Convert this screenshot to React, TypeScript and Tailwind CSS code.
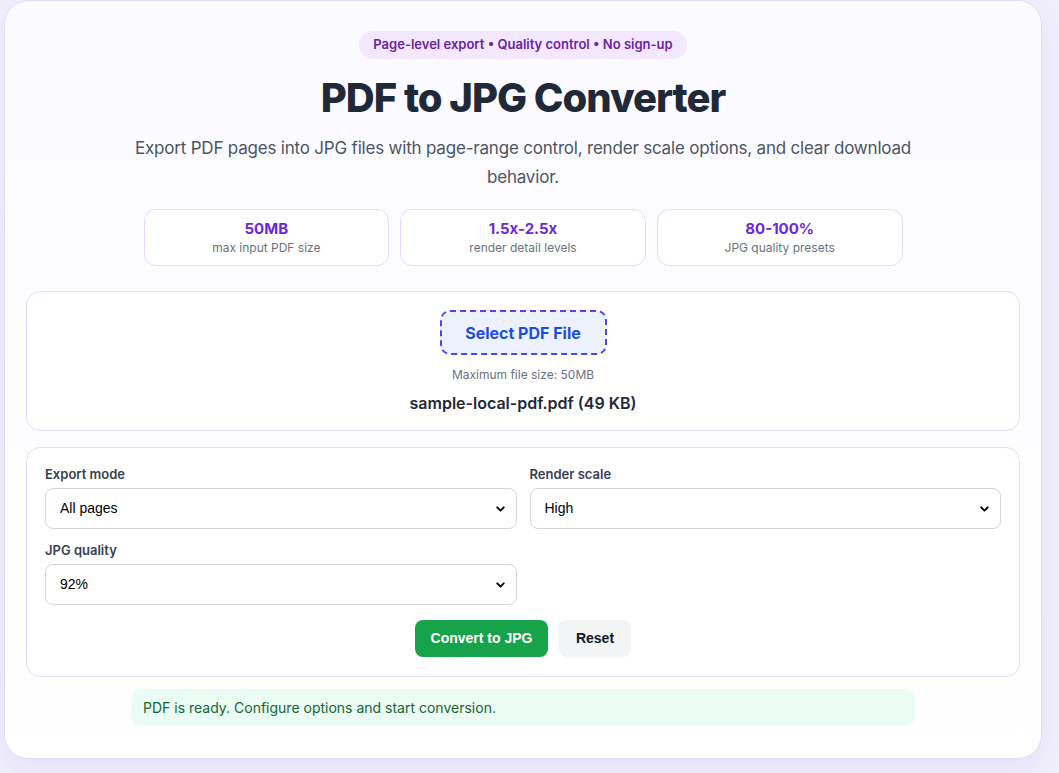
import { ChevronDown } from 'lucide-react';

const stats = [
    { value: '50MB', label: 'max input PDF size' },
    { value: '1.5x-2.5x', label: 'render detail levels' },
    { value: '80-100%', label: 'JPG quality presets' },
];

function Field({ label, value, options }: { label: string; value: string; options: string[] }) {
    return (
        <div className="flex flex-col gap-[5px]">
            <label className="text-[13px] font-semibold text-[#374151] leading-[18px]">{label}</label>
            <div className="relative">
                <select
                    defaultValue={value}
                    className="w-full h-[41px] appearance-none rounded-[8px] border border-[#d1d5db] bg-white pl-[14px] pr-8 pb-[1px] text-[14px] text-black outline-none [font-family:'Liberation_Sans',Arial,sans-serif]"
                >
                    {options.map((o) => (
                        <option key={o}>{o}</option>
                    ))}
                </select>
                <ChevronDown className="absolute right-[10px] top-1/2 -translate-y-1/2 w-[13px] h-[13px] text-black pointer-events-none" strokeWidth={3.5} />
            </div>
        </div>
    );
}

export default function App() {
    return (
        <div className="min-h-screen w-full bg-[#f1effb] [font-family:Inter,'Noto_Sans',sans-serif]">
            <div className="ml-[4px] w-[1038px] rounded-[24px] border border-[#e2dcf7] bg-gradient-to-b from-[#fbfaff] to-white px-[21px] pt-[30px] pb-[32px] shadow-[0_12px_30px_rgba(124,58,237,0.08)]">
                <div className="flex flex-col items-center">
                    <span className="rounded-full bg-[#f3e8ff] px-[14px] h-[28px] flex items-center text-[13px] font-semibold text-[#6b21a8]">
                        Page-level export • Quality control • No sign-up
                    </span>
                    <h1 className="mt-[15px] text-[40px] leading-[48px] font-extrabold tracking-[-1px] text-[#1f2937]">PDF to JPG Converter</h1>
                    <p className="mt-[12px] max-w-[830px] text-center text-[17px] leading-[29px] tracking-[-0.2px] text-[#4b5563]">
                        Export PDF pages into JPG files with page-range control, render scale options, and clear download behavior.
                    </p>
                </div>

                <div className="mx-auto mt-[17px] grid w-[759px] grid-cols-3 gap-[11px]">
                    {stats.map((s) => (
                        <div key={s.value} className="flex h-[57px] flex-col items-center justify-center rounded-[12px] border border-[#e9d8fd] bg-white">
                            <div className="text-[15px] font-bold leading-[20px] text-[#6d28d9]">{s.value}</div>
                            <div className="text-[12px] leading-[17px] text-[#6b7280]">{s.label}</div>
                        </div>
                    ))}
                </div>

                <div className="mt-[25px] flex flex-col items-center rounded-[14px] border border-[#e9dcfb] bg-white pt-[18px] pb-[15px]">
                    <button className="h-[45px] w-[167px] rounded-[10px] border-2 border-dashed border-[#4f46e5] bg-[#eef2ff] text-[16px] font-bold text-[#1d4ed8]">
                        Select PDF File
                    </button>
                    <div className="mt-[12px] text-[12px] leading-[16px] text-[#6b7280]">Maximum file size: 50MB</div>
                    <div className="mt-[8px] text-[16px] font-semibold leading-[24px] text-[#1f2937]">sample-local-pdf.pdf (49 KB)</div>
                </div>

                <div className="mt-[16px] rounded-[14px] border border-[#e9dcfb] bg-white px-[18px] pt-[17px] pb-[19px]">
                    <div className="grid grid-cols-2 gap-x-[13px] gap-y-[12px]">
                        <Field label="Export mode" value="All pages" options={['All pages', 'Page range']} />
                        <Field label="Render scale" value="High" options={['Standard', 'High', 'Ultra']} />
                        <Field label="JPG quality" value="92%" options={['80%', '92%', '100%']} />
                    </div>
                    <div className="mt-[15px] flex justify-center gap-[11px] [font-family:'Liberation_Sans',Arial,sans-serif]">
                        <button className="h-[37px] w-[133px] rounded-[8px] bg-[#16a34a] text-[14px] font-bold text-white">Convert to JPG</button>
                        <button className="h-[37px] w-[72px] rounded-[8px] bg-[#f3f4f6] text-[14px] font-bold text-[#111827]">Reset</button>
                    </div>
                </div>

                <div className="mx-auto mt-[12px] flex h-[37px] w-[784px] items-center rounded-[10px] bg-[#eafcf3] px-[12px] text-[14px] text-[#166534]">
                    PDF is ready. Configure options and start conversion.
                </div>
            </div>
        </div>
    );
}
